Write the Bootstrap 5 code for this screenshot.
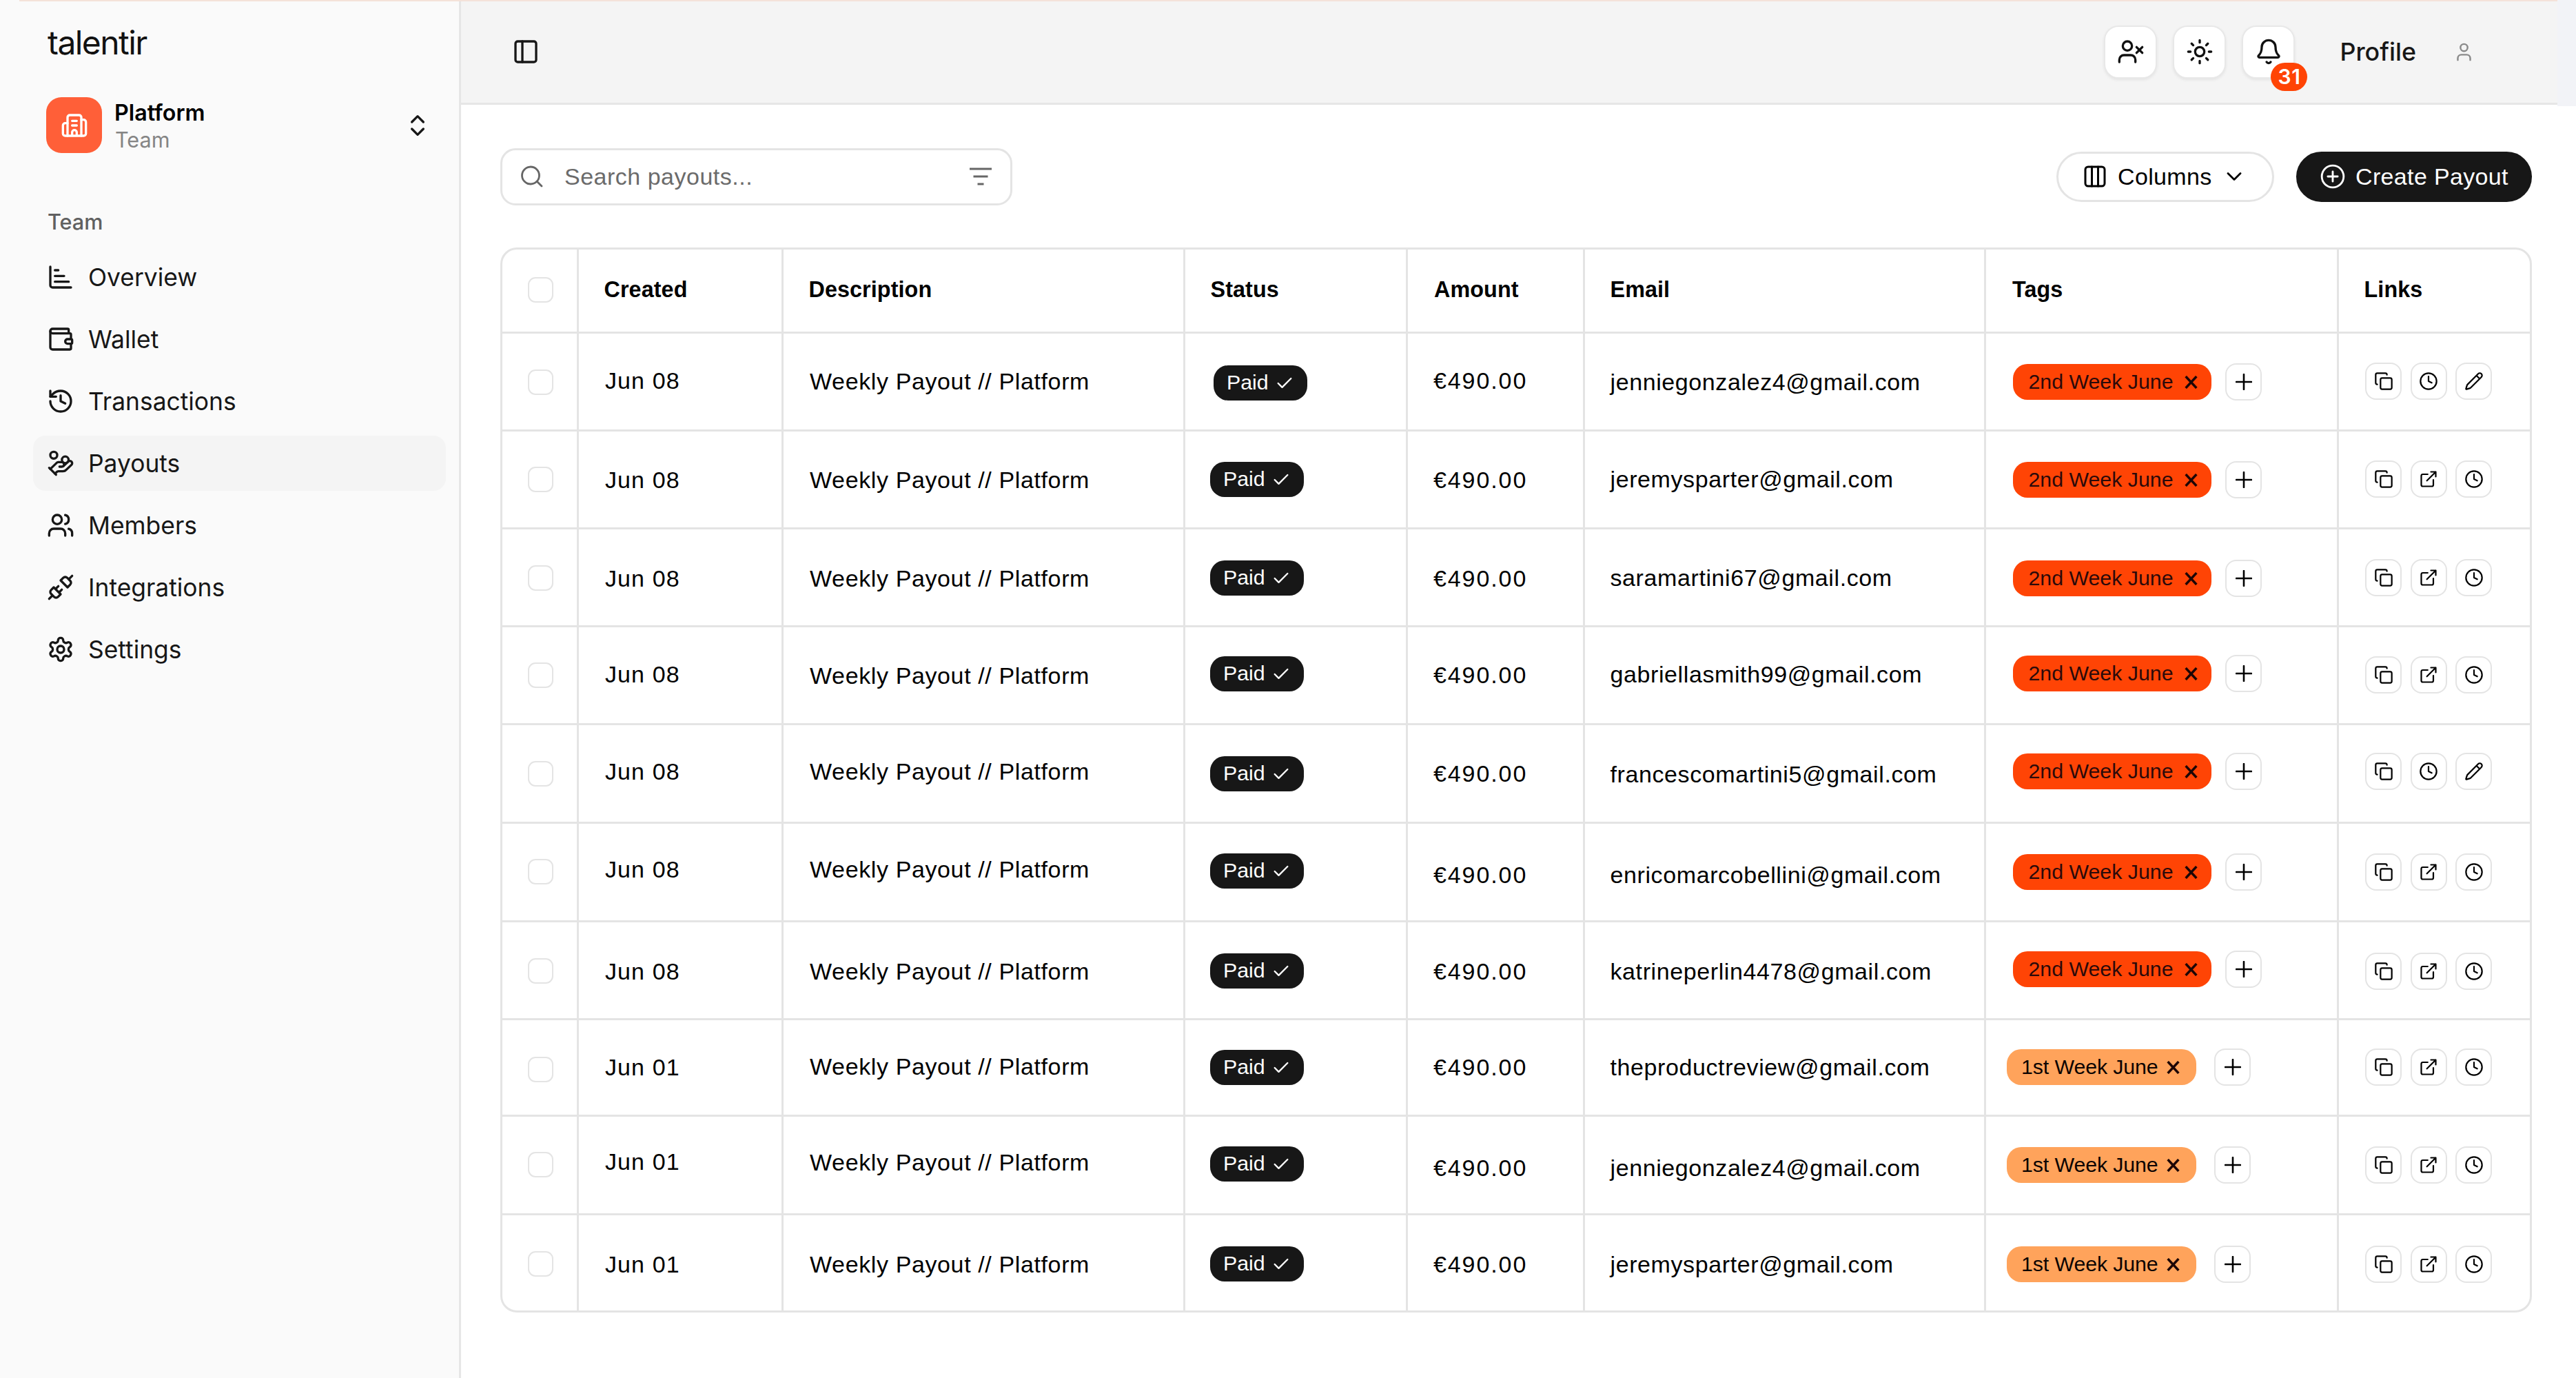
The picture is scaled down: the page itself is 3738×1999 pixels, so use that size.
<!DOCTYPE html>
<html lang="en">
<head>
<meta charset="utf-8">
<title>Talentir – Payouts</title>
<meta name="viewport" content="width=device-width, initial-scale=1">
<link href="https://cdn.jsdelivr.net/npm/bootstrap@5.3.0/dist/css/bootstrap.min.css" rel="stylesheet">
<style>
  :root { --line: #e4e4e4; --ink: #171717; --ui: Inter, "Liberation Sans", sans-serif; --grid: "Liberation Sans", Arial, sans-serif; }
  body { background: #fff; color: #000; font-family: var(--grid); font-size: 34px; line-height: 1; overflow: hidden; }
  body::before { content: ""; position: absolute; top: 0; left: 28px; width: 3683px; height: 2px; background: #f4e2d9; z-index: 5; }
  .ico { width: 40px; height: 40px; fill: none; stroke: currentColor; stroke-width: 2; stroke-linecap: round; stroke-linejoin: round; flex: none; display: block; }
  .app-shell { height: 1999px; }

  /* sidebar */
  .side-panel { width: 669px; border-right: 3px solid #e6e6e6; background: #fafafa; font-family: var(--ui); padding: 0 20px 0 48px; color: var(--ink); }
  .brand-word { font-size: 48px; letter-spacing: -1.55px; line-height: 60px; padding: 32px 0 0 21px; font-weight: 400; color: #111; }
  .team-switch { margin-top: 44px; height: 91px; padding-left: 19px; padding-right: 20px; }
  .team-tile { width: 81px; height: 81px; border-radius: 22px; background: #ff5f38; color: #fff; }
  .team-text { margin-left: 18px; padding-top: 3px; }
  .team-name { font-size: 32.2px; font-weight: 600; line-height: 39px; color: #000; }
  .team-kind { font-size: 30.6px; line-height: 39px; color: #858585; padding-left: 1px; }
  .side-label { font-size: 30.6px; font-weight: 500; line-height: 40px; color: #606060; padding: 75px 0 20px 21px; }
  .side-nav { gap: 10px; }
  .side-nav .nav-link { height: 80px; width: 599px; padding: 0 0 0 20px; border-radius: 18px; gap: 20px; font-size: 35.4px; color: #171717; }
  .side-nav .nav-link.active { background: #f4f4f4; }
  .side-nav span { padding-top: 2px; }

  /* top bar */
  .top-wrap { height: 152px; }
  .top-strip { height: 152px; background: #f4f4f4; border-bottom: 3px solid #e6e6e6; padding: 1px 120px 0 74px; font-family: var(--ui); color: var(--ink); }
  .top-gutter { width: 27px; height: 154px; background: #f2f3f7; }
  .top-actions { gap: 23px; }
  .sq-btn { width: 77px; height: 77px; border-radius: 21px; background: #fff; border: 2px solid #e8e8e8; box-shadow: 0 2px 4px rgba(0,0,0,.07); color: #111; padding: 0; }
  .count-pill { position: absolute; left: 40px; top: 52px; width: 53px; height: 41px; border-radius: 21px; background: #ff4405; color: #fff; font-size: 30px; font-weight: 600; line-height: 41px; letter-spacing: .5px; text-align: center; }
  .profile-word { font-size: 35.8px; font-weight: 500; margin-left: 65px; margin-right: 54px; padding-top: 1px; }
  .person-ico { width: 31px; height: 31px; color: #8a8a8a; margin-top: 1px; stroke-width: 1.9; }

  /* toolbar */
  .main-area { padding: 63px 64px 0 57px; }
  .tool-row { height: 82px; }
  .search-box { width: 743px; height: 83px; border: 3px solid var(--line); border-radius: 22px; padding: 0 27px; color: #666; }
  .search-box input { border: 0; outline: 0; background: none; font-size: 34px; letter-spacing: .5px; padding: 0; color: #666; min-width: 0; margin-left: 31px; font-family: var(--grid); }
  .search-box input::placeholder { color: #6b6b6b; opacity: 1; }
  .srch-ico { width: 32px; height: 32px; stroke-width: 2.8; }
  .filt-ico { width: 32px; height: 26px; stroke-width: 3; stroke-linecap: butt; }
  .tool-actions { gap: 32px; }
  .pill-btn { height: 73px; border-radius: 37px; font-size: 34px; letter-spacing: .35px; padding: 0; line-height: 1; font-family: var(--grid); border: 3px solid var(--line); background: #fff; color: #000; }
  .pill-cols { width: 316px; padding-left: 34px; }
  .pill-create { width: 342px; background: var(--ink); border-color: var(--ink); color: #fff; padding-left: 31px; }
  .cols-ico { width: 32px; height: 32px; stroke-width: 3; margin-left: 3px; }
  .cols-text { margin-left: 17px; width: 158px; text-align: left; }
  .down-ico { width: 22px; height: 22px; stroke-width: 2.8; }
  .plusc-ico { width: 38px; height: 38px; stroke-width: 1.8; margin-right: 14px; }

  /* payouts grid */
  .grid-frame { margin-top: 62px; width: 2948px; border: 3px solid var(--line); border-radius: 24px; overflow: hidden; }
  .pay-table { table-layout: fixed; border-collapse: separate; border-spacing: 0; margin: 0; color: #000; width: 2942px; }
  .pay-table > :not(caption) > * > * { padding: 0; border: 0 solid var(--line); border-right-width: 3px; border-bottom-width: 3px; vertical-align: top; background: none; box-shadow: none; }
  .pay-table tr > :last-child { border-right-width: 0; }
  .pay-table tbody tr:last-child > * { border-bottom-width: 0; }
  .pay-table th { font-size: 32.3px; font-weight: 700; letter-spacing: .1px; height: 122px; padding-top: 31px !important; padding-left: 36.5px !important; }
  .w-chk { width: 111px; } .w-date { width: 297px; } .w-desc { width: 583px; } .w-stat { width: 323px; }
  .w-amt { width: 257px; } .w-mail { width: 582px; } .w-tags { width: 512px; } .w-links { width: 277px; }
  .th-amt, .th-tags { padding-left: 1.5px; }
  .slot { height: 54px; white-space: nowrap; display: flex; align-items: center; }
  .chk { width: 37px; height: 37px; border: 2px solid var(--line); border-radius: 11px; display: block; background: #fff; }
  .in-chk { padding-left: 36.5px; }
  .in-date { padding: 0 0 2px 38px; letter-spacing: 1.1px; }
  .in-desc { padding-left: 38px; letter-spacing: .62px; }
  .in-stat { padding-left: 36px; }
  .in-stat.first { padding-left: 41px; }
  .in-amt { padding: 0 0 2px 37px; letter-spacing: 1.9px; }
  .in-mail { padding: 0 0 2px 36.5px; letter-spacing: .6px; }
  .in-tags { padding-left: 38.5px; }
  .in-tags.early { padding-left: 30px; }
  .in-links { padding-left: 38px; gap: 12.7px; }
  .paid-pill { width: 136px; height: 51px; border-radius: 21px; background: var(--ink); color: #fff; font-size: 30.3px; padding-left: 19px; gap: 9px; }
  .paid-pill .ico { width: 28px; height: 28px; }
  .tag-pill { width: 288px; height: 52px; border-radius: 21px; background: #ff4405; color: #2b0a0a; font-size: 30.3px; padding: 1px 20px 0 23px; }
  .tag-pill .ico { width: 19px; height: 19px; color: #1d0606; }
  .early .tag-pill { width: 274.5px; background: #ffa35b; color: #0c0402; letter-spacing: -.1px; padding: 1px 24px 0 21px; }
  .mini-btn { width: 53px; height: 54px; border-radius: 16px; border: 2px solid var(--line); background: #fff; color: #000; padding: 0; }
  .mini-btn .ico { width: 28px; height: 28px; stroke-width: 1.9; }
  .in-tags .mini-btn { margin-left: 20.5px; }
  .in-tags.early .mini-btn { margin-left: 26.5px; }
  .in-tags .mini-btn .ico { width: 24px; height: 24px; }
</style>
<script src="https://cdn.jsdelivr.net/npm/bootstrap@5.3.0/dist/js/bootstrap.bundle.min.js"></script>
</head>
<body>
<svg class="d-none" xmlns="http://www.w3.org/2000/svg">
  <symbol id="i-building" viewBox="0 0 24 24"><path d="M10 12h4M10 8h4M14 21v-3a2 2 0 0 0-4 0v3M6 10H4a2 2 0 0 0-2 2v7a2 2 0 0 0 2 2h16a2 2 0 0 0 2-2V9a2 2 0 0 0-2-2h-2"/><path d="M6 21V5a2 2 0 0 1 2-2h8a2 2 0 0 1 2 2v16"/></symbol>
  <symbol id="i-updown" viewBox="0 0 24 24"><path d="m7 15 5 5 5-5M7 9l5-5 5 5"/></symbol>
  <symbol id="i-chart" viewBox="0 0 24 24"><path d="M3 3v16a2 2 0 0 0 2 2h16M7 11h8M7 16h12M7 6h3"/></symbol>
  <symbol id="i-wallet" viewBox="0 0 24 24"><path d="M19 7V4a1 1 0 0 0-1-1H5a2 2 0 0 0 0 4h15a1 1 0 0 1 1 1v4h-3a2 2 0 0 0 0 4h3a1 1 0 0 0 1-1v-2a1 1 0 0 0-1-1"/><path d="M3 5v14a2 2 0 0 0 2 2h15a1 1 0 0 0 1-1v-4"/></symbol>
  <symbol id="i-history" viewBox="0 0 24 24"><path d="M3 12a9 9 0 1 0 9-9 9.75 9.75 0 0 0-6.74 2.74L3 8"/><path d="M3 3v5h5M12 7v5l4 2"/></symbol>
  <symbol id="i-hand" viewBox="0 0 24 24"><path d="M11 15h2a2 2 0 1 0 0-4h-3c-.6 0-1.1.2-1.4.6L3 17"/><path d="m7 21 1.6-1.4c.3-.4.8-.6 1.4-.6h4c1.1 0 2.1-.4 2.8-1.2l4.6-4.4a2 2 0 0 0-2.75-2.91l-4.2 3.9"/><path d="m2 16 6 6"/><circle cx="16" cy="9" r="2.9"/><circle cx="6" cy="5" r="3"/></symbol>
  <symbol id="i-users" viewBox="0 0 24 24"><path d="M16 21v-2a4 4 0 0 0-4-4H6a4 4 0 0 0-4 4v2"/><circle cx="9" cy="7" r="4"/><path d="M22 21v-2a4 4 0 0 0-3-3.87M16 3.13a4 4 0 0 1 0 7.75"/></symbol>
  <symbol id="i-plugs" viewBox="0 0 24 24"><path d="m19 5 3-3M2 22l3-3M6.3 20.3a2.4 2.4 0 0 0 3.4 0L12 18l-6-6-2.3 2.3a2.4 2.4 0 0 0 0 3.4ZM7.5 13.5 10 11M10.5 16.5 13 14M12 6l6 6 2.3-2.3a2.4 2.4 0 0 0 0-3.4l-2.6-2.6a2.4 2.4 0 0 0-3.4 0Z"/></symbol>
  <symbol id="i-gear" viewBox="0 0 24 24"><path d="M12.22 2h-.44a2 2 0 0 0-2 2v.18a2 2 0 0 1-1 1.73l-.43.25a2 2 0 0 1-2 0l-.15-.08a2 2 0 0 0-2.73.73l-.22.38a2 2 0 0 0 .73 2.73l.15.1a2 2 0 0 1 1 1.72v.51a2 2 0 0 1-1 1.74l-.15.09a2 2 0 0 0-.73 2.73l.22.38a2 2 0 0 0 2.73.73l.15-.08a2 2 0 0 1 2 0l.43.25a2 2 0 0 1 1 1.73V20a2 2 0 0 0 2 2h.44a2 2 0 0 0 2-2v-.18a2 2 0 0 1 1-1.73l.43-.25a2 2 0 0 1 2 0l.15.08a2 2 0 0 0 2.73-.73l.22-.39a2 2 0 0 0-.73-2.73l-.15-.08a2 2 0 0 1-1-1.74v-.5a2 2 0 0 1 1-1.74l.15-.09a2 2 0 0 0 .73-2.73l-.22-.38a2 2 0 0 0-2.73-.73l-.15.08a2 2 0 0 1-2 0l-.43-.25a2 2 0 0 1-1-1.73V4a2 2 0 0 0-2-2z"/><circle cx="12" cy="12" r="3"/></symbol>
  <symbol id="i-panel" viewBox="0 0 24 24"><rect x="3" y="3" width="18" height="18" rx="2"/><path d="M9 3v18"/></symbol>
  <symbol id="i-userx" viewBox="0 0 24 24"><path d="M16 21v-2a4 4 0 0 0-4-4H6a4 4 0 0 0-4 4v2"/><circle cx="9" cy="7" r="4"/><path d="m17 8 5 5M22 8l-5 5"/></symbol>
  <symbol id="i-sun" viewBox="0 0 24 24"><circle cx="12" cy="12" r="4"/><path d="M12 2v2M12 20v2M4.93 4.93l1.41 1.41M17.66 17.66l1.41 1.41M2 12h2M20 12h2M6.34 17.66l-1.41 1.41M19.07 4.93l-1.41 1.41"/></symbol>
  <symbol id="i-bell" viewBox="0 0 24 24"><path d="M10.27 21a2 2 0 0 0 3.46 0M3.26 15.33A1 1 0 0 0 4 17h16a1 1 0 0 0 .74-1.67C19.41 13.96 18 12.5 18 8A6 6 0 0 0 6 8c0 4.5-1.41 5.96-2.74 7.33"/></symbol>
  <symbol id="i-person" viewBox="0 0 24 24"><path d="M19 21v-2a4 4 0 0 0-4-4H9a4 4 0 0 0-4 4v2"/><circle cx="12" cy="7" r="4"/></symbol>
  <symbol id="i-search" viewBox="0 0 32 32"><circle cx="14" cy="14.5" r="12.5"/><path d="m23.5 23.5 6.5 6.5"/></symbol>
  <symbol id="i-filter" viewBox="0 0 32 26"><path d="M0 2h32M5.500 13h21M11.500 24h9"/></symbol>
  <symbol id="i-cols" viewBox="0 0 32 32"><rect x="2" y="2" width="28" height="28" rx="4"/><path d="M11.5 2v28M20.5 2v28"/></symbol>
  <symbol id="i-down" viewBox="0 0 22 22"><path d="m2 6.5 9 9 9-9"/></symbol>
  <symbol id="i-pluscircle" viewBox="0 0 24 24"><circle cx="12" cy="12" r="10"/><path d="M7.5 12h9M12 7.5v9"/></symbol>
  <symbol id="i-check" viewBox="0 0 24 24"><path d="M20 6 9 17l-5-5"/></symbol>
  <symbol id="i-cross" viewBox="0 0 17 17"><path d="m1.500 1 14 15M15.500 1l-14 15" stroke-width="3.200" stroke-linecap="butt"/></symbol>
  <symbol id="i-plus" viewBox="0 0 24 24"><path d="M1 12h22M12 1v22" stroke-width="2.6"/></symbol>
  <symbol id="i-copy" viewBox="0 0 24 24"><rect x="8" y="8" width="14" height="14" rx="2"/><path d="M4 16c-1.1 0-2-.9-2-2V4c0-1.1.9-2 2-2h10c1.1 0 2 .9 2 2"/></symbol>
  <symbol id="i-clock" viewBox="0 0 24 24"><circle cx="12" cy="12" r="10"/><path d="M12 6v6l4 2"/></symbol>
  <symbol id="i-open" viewBox="0 0 24 24"><path d="M15 3h6v6M10 14 21 3M18 13v6a2 2 0 0 1-2 2H5a2 2 0 0 1-2-2V8a2 2 0 0 1 2-2h6"/></symbol>
  <symbol id="i-pencil" viewBox="0 0 24 24"><path d="M21.17 6.81a1 1 0 0 0-3.99-3.99L3.84 16.17a2 2 0 0 0-.5.83l-1.32 4.35a.5.5 0 0 0 .62.62l4.35-1.32a2 2 0 0 0 .83-.5zM15 5l4 4"/></symbol>
</svg>

<div class="app-shell d-flex">
  <aside class="side-panel flex-shrink-0">
    <div class="brand-word">talentir</div>
    <div class="team-switch d-flex align-items-center">
      <div class="team-tile d-flex align-items-center justify-content-center"><svg class="ico"><use href="#i-building"/></svg></div>
      <div class="team-text flex-grow-1">
        <div class="team-name">Platform</div>
        <div class="team-kind">Team</div>
      </div>
      <svg class="ico"><use href="#i-updown"/></svg>
    </div>
    <div class="side-label">Team</div>
    <nav class="side-nav nav flex-column">
      <a class="nav-link d-flex align-items-center"><svg class="ico"><use href="#i-chart"/></svg><span>Overview</span></a>
      <a class="nav-link d-flex align-items-center"><svg class="ico"><use href="#i-wallet"/></svg><span>Wallet</span></a>
      <a class="nav-link d-flex align-items-center"><svg class="ico"><use href="#i-history"/></svg><span>Transactions</span></a>
      <a class="nav-link active d-flex align-items-center"><svg class="ico"><use href="#i-hand"/></svg><span>Payouts</span></a>
      <a class="nav-link d-flex align-items-center"><svg class="ico"><use href="#i-users"/></svg><span>Members</span></a>
      <a class="nav-link d-flex align-items-center"><svg class="ico"><use href="#i-plugs"/></svg><span>Integrations</span></a>
      <a class="nav-link d-flex align-items-center"><svg class="ico"><use href="#i-gear"/></svg><span>Settings</span></a>
    </nav>
  </aside>

  <div class="flex-grow-1">
    <div class="top-wrap d-flex align-items-start">
      <header class="top-strip d-flex align-items-center flex-grow-1">
        <svg class="ico me-auto"><use href="#i-panel"/></svg>
        <div class="top-actions d-flex">
          <button class="btn sq-btn d-flex align-items-center justify-content-center"><svg class="ico"><use href="#i-userx"/></svg></button>
          <button class="btn sq-btn d-flex align-items-center justify-content-center"><svg class="ico"><use href="#i-sun"/></svg></button>
          <button class="btn sq-btn d-flex align-items-center justify-content-center position-relative"><svg class="ico"><use href="#i-bell"/></svg><span class="count-pill">31</span></button>
        </div>
        <div class="profile-word">Profile</div>
        <svg class="ico person-ico"><use href="#i-person"/></svg>
      </header>
      <div class="top-gutter"></div>
    </div>

    <main class="main-area">
      <div class="tool-row d-flex align-items-center justify-content-between">
        <div class="search-box d-flex align-items-center">
          <svg class="ico srch-ico"><use href="#i-search"/></svg>
          <input class="flex-grow-1" type="text" placeholder="Search payouts...">
          <svg class="ico filt-ico"><use href="#i-filter"/></svg>
        </div>
        <div class="tool-actions d-flex align-items-center">
          <button class="btn pill-btn pill-cols d-flex align-items-center"><svg class="ico cols-ico"><use href="#i-cols"/></svg><span class="cols-text">Columns</span><svg class="ico down-ico"><use href="#i-down"/></svg></button>
          <button class="btn pill-btn pill-create d-flex align-items-center"><svg class="ico plusc-ico"><use href="#i-pluscircle"/></svg><span>Create Payout</span></button>
        </div>
      </div>

      <div class="grid-frame">
        <table class="table pay-table">
          <colgroup><col class="w-chk"><col class="w-date"><col class="w-desc"><col class="w-stat"><col class="w-amt"><col class="w-mail"><col class="w-tags"><col class="w-links"></colgroup>
          <thead>
            <tr>
              <th><div class="slot"><span class="chk"></span></div></th>
              <th><div class="slot">Created</div></th>
              <th><div class="slot">Description</div></th>
              <th><div class="slot">Status</div></th>
              <th><div class="slot th-amt">Amount</div></th>
              <th><div class="slot">Email</div></th>
              <th><div class="slot th-tags">Tags</div></th>
              <th><div class="slot">Links</div></th>
            </tr>
          </thead>
          <tbody id="payouts"></tbody>
        </table>
      </div>
    </main>
  </div>
</div>
<script>
  /* One entry per payout: date, e-mail, tag, link icons, row height, and the top
     margin of each cell's content (checkbox, date, description, status, amount, e-mail, tags, links). */
  const rows = [
    ['Jun 08', 'jenniegonzalez4@gmail.com', 2, 'copy clock pencil', 142, [43, 42, 42, 44.5, 42, 44, 43, 42]],
    ['Jun 08', 'jeremysparter@gmail.com', 2, 'copy open clock', 142, [42, 44, 43, 42.5, 44, 43, 43, 42]],
    ['Jun 08', 'saramartini67@gmail.com', 2, 'copy open clock', 142, [43, 45, 44, 43.5, 45, 44, 44, 43]],
    ['Jun 08', 'gabriellasmith99@gmail.com', 2, 'copy open clock', 142, [42, 42, 43, 40.5, 43, 42, 40, 42]],
    ['Jun 08', 'francescomartini5@gmail.com', 2, 'copy clock pencil', 143, [43, 41, 40, 43.5, 44, 45, 40, 40]],
    ['Jun 08', 'enricomarcobellini@gmail.com', 2, 'copy open clock', 143, [42, 40, 39, 41.5, 48, 48, 43, 43]],
    ['Jun 08', 'katrineperlin4478@gmail.com', 2, 'copy open clock', 142, [43, 45, 44, 43.5, 45, 45, 41, 44]],
    ['Jun 01', 'theproductreview@gmail.com', 1, 'copy open clock', 140, [44, 42, 40, 41.5, 42, 42, 41, 41]],
    ['Jun 01', 'jenniegonzalez4@gmail.com', 1, 'copy open clock', 143, [42, 39, 39, 41.5, 48, 48, 43, 43]],
    ['Jun 01', 'jeremysparter@gmail.com', 1, 'copy open clock', 138, [43, 45, 44, 43.5, 45, 45, 44, 44]]
  ];
  const ico = n => `<svg class="ico"><use href="#i-${n}"/></svg>`;
  const mini = n => `<button class="btn mini-btn d-flex align-items-center justify-content-center">${ico(n)}</button>`;
  document.getElementById('payouts').innerHTML = rows.map(([date, mail, week, links, h, m], i) => {
    const td = (k, cls, html) => `<td><div class="slot ${cls}" style="margin-top:${m[k]}px">${html}</div></td>`;
    return `<tr style="height:${h}px">` +
      td(0, 'in-chk', '<span class="chk"></span>') +
      td(1, 'in-date', date) +
      td(2, 'in-desc', 'Weekly Payout // Platform') +
      td(3, 'in-stat' + (i ? '' : ' first'), `<span class="paid-pill d-flex align-items-center">Paid${ico('check')}</span>`) +
      td(4, 'in-amt', '€490.00') +
      td(5, 'in-mail', mail) +
      td(6, 'in-tags' + (week === 1 ? ' early' : ''), `<span class="tag-pill d-flex align-items-center justify-content-between">${week === 1 ? '1st' : '2nd'} Week June${ico('cross')}</span>${mini('plus')}`) +
      td(7, 'in-links', links.split(' ').map(mini).join('')) + '</tr>';
  }).join('');
</script>
</body>
</html>
